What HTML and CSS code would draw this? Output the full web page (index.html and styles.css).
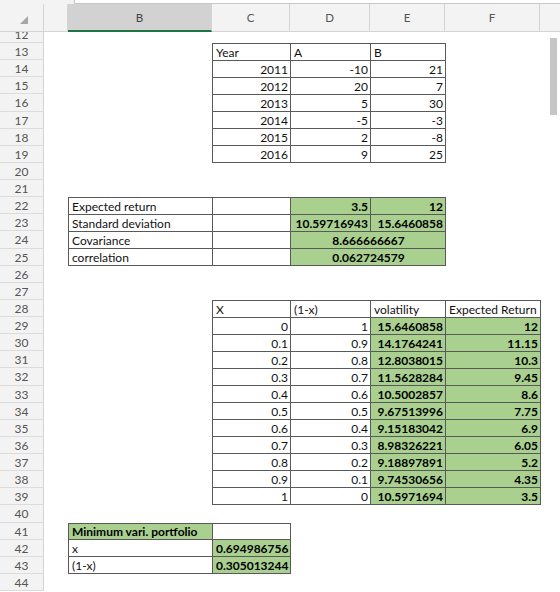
FILE: index.html
```html
<!DOCTYPE html>
<html lang="en">
<head>
  <meta charset="UTF-8">
  <title>Portfolio of two assets</title>
  <meta name="viewport" content="width=device-width, initial-scale=1.0">
  <link rel="stylesheet" href="styles.css">
</head>
<body>

<div class="topbar"><div class="formula"></div></div>

<div class="colheads">
  <div class="corner">
    <svg width="8" height="8" viewBox="0 0 8 8"><polygon points="8,0 8,8 0,8" fill="#a6a6a6"/></svg>
  </div>
  <div class="colhead"></div>
  <div class="colhead selected">B</div>
  <div class="colhead">C</div>
  <div class="colhead">D</div>
  <div class="colhead">E</div>
  <div class="colhead">F</div>
  <div class="colhead last"></div>
</div>

<div class="viewport">
  <div class="sheet">
    <div class="rowhead">12</div>
    <div class="rowhead">13</div>
    <div class="rowhead">14</div>
    <div class="rowhead">15</div>
    <div class="rowhead">16</div>
    <div class="rowhead">17</div>
    <div class="rowhead">18</div>
    <div class="rowhead">19</div>
    <div class="rowhead">20</div>
    <div class="rowhead">21</div>
    <div class="rowhead">22</div>
    <div class="rowhead">23</div>
    <div class="rowhead">24</div>
    <div class="rowhead">25</div>
    <div class="rowhead">26</div>
    <div class="rowhead">27</div>
    <div class="rowhead">28</div>
    <div class="rowhead">29</div>
    <div class="rowhead">30</div>
    <div class="rowhead">31</div>
    <div class="rowhead">32</div>
    <div class="rowhead">33</div>
    <div class="rowhead">34</div>
    <div class="rowhead">35</div>
    <div class="rowhead">36</div>
    <div class="rowhead">37</div>
    <div class="rowhead">38</div>
    <div class="rowhead">39</div>
    <div class="rowhead">40</div>
    <div class="rowhead">41</div>
    <div class="rowhead">42</div>
    <div class="rowhead">43</div>
    <div class="rowhead">44</div>

    <!-- C13:E19 returns by year -->
    <table class="block t-years">
      <colgroup><col style="width:78px"><col style="width:80px"><col style="width:75px"></colgroup>
      <tr><td>Year</td><td>A</td><td>B</td></tr>
      <tr><td class="num">2011</td><td class="num">-10</td><td class="num">21</td></tr>
      <tr><td class="num">2012</td><td class="num">20</td><td class="num">7</td></tr>
      <tr><td class="num">2013</td><td class="num">5</td><td class="num">30</td></tr>
      <tr><td class="num">2014</td><td class="num">-5</td><td class="num">-3</td></tr>
      <tr><td class="num">2015</td><td class="num">2</td><td class="num">-8</td></tr>
      <tr><td class="num">2016</td><td class="num">9</td><td class="num">25</td></tr>
    </table>

    <!-- B22:E25 summary stats -->
    <table class="block t-stats">
      <colgroup><col style="width:144px"><col style="width:78px"><col style="width:80px"><col style="width:75px"></colgroup>
      <tr><td>Expected return</td><td></td><td class="num hl">3.5</td><td class="num hl">12</td></tr>
      <tr><td>Standard deviation</td><td></td><td class="num hl">10.59716943</td><td class="num hl">15.6460858</td></tr>
      <tr><td>Covariance</td><td></td><td class="mid hl" colspan="2">8.666666667</td></tr>
      <tr><td>correlation</td><td></td><td class="mid hl" colspan="2">0.062724579</td></tr>
    </table>

    <!-- C28:F39 weights vs risk/return -->
    <table class="block t-frontier">
      <colgroup><col style="width:78px"><col style="width:80px"><col style="width:75px"><col style="width:95px"></colgroup>
      <tr><td>X</td><td>(1-x)</td><td>volatility</td><td>Expected Return</td></tr>
      <tr><td class="num">0</td><td class="num">1</td><td class="num hl">15.6460858</td><td class="num hl">12</td></tr>
      <tr><td class="num">0.1</td><td class="num">0.9</td><td class="num hl">14.1764241</td><td class="num hl">11.15</td></tr>
      <tr><td class="num">0.2</td><td class="num">0.8</td><td class="num hl">12.8038015</td><td class="num hl">10.3</td></tr>
      <tr><td class="num">0.3</td><td class="num">0.7</td><td class="num hl">11.5628284</td><td class="num hl">9.45</td></tr>
      <tr><td class="num">0.4</td><td class="num">0.6</td><td class="num hl">10.5002857</td><td class="num hl">8.6</td></tr>
      <tr><td class="num">0.5</td><td class="num">0.5</td><td class="num hl">9.67513996</td><td class="num hl">7.75</td></tr>
      <tr><td class="num">0.6</td><td class="num">0.4</td><td class="num hl">9.15183042</td><td class="num hl">6.9</td></tr>
      <tr><td class="num">0.7</td><td class="num">0.3</td><td class="num hl">8.98326221</td><td class="num hl">6.05</td></tr>
      <tr><td class="num">0.8</td><td class="num">0.2</td><td class="num hl">9.18897891</td><td class="num hl">5.2</td></tr>
      <tr><td class="num">0.9</td><td class="num">0.1</td><td class="num hl">9.74530656</td><td class="num hl">4.35</td></tr>
      <tr><td class="num">1</td><td class="num">0</td><td class="num hl">10.5971694</td><td class="num hl">3.5</td></tr>
    </table>

    <!-- B41:C43 minimum variance weights -->
    <table class="block t-minvar">
      <colgroup><col style="width:144px"><col style="width:78px"></colgroup>
      <tr><td class="hl">Minimum vari. portfolio</td><td></td></tr>
      <tr><td>x</td><td class="num hl">0.694986756</td></tr>
      <tr><td>(1-x)</td><td class="num hl">0.305013244</td></tr>
    </table>
  </div>

  <div class="scrollthumb"></div>
</div>

</body>
</html>
```

FILE: styles.css
```css
html, body {
  margin: 0;
  padding: 0;
  background-color: #fff;
  font-family: Lato, "Open Sans", sans-serif;
}

body {
  width: 560px;
  height: 592px;
  overflow: hidden;
}

/* strip left over from the formula bar */
.topbar {
  height: 4px;
  background-color: #f3f3f3;
  padding-left: 74px;
  box-sizing: border-box;
}

.formula {
  height: 3px;
  background-color: #fff;
  border-left: 1px solid #c8c8c8;
  border-bottom: 1px solid #c8c8c8;
}

.colheads,
.sheet {
  display: grid;
  grid-template-columns: 44px 24px 144px 78px 80px 75px 95px 1fr;
}

.colheads {
  height: 28px;
  background-color: #f3f3f3;
}

.corner,
.colhead {
  box-sizing: border-box;
  border-right: 1px solid #d4d4d4;
  border-bottom: 1px solid #d4d4d4;
  display: flex;
  align-items: center;
  justify-content: center;
  font-size: 11.5px;
  color: #555;
}

.corner svg {
  margin: 4px 0 0 4px;
}

.colhead.selected {
  background-color: #d2d2d2;
  border-bottom: 2px solid #217346;
  color: #444;
}

.colhead.last {
  border-right: none;
}

.viewport {
  position: relative;
  height: 560px;
  overflow: hidden;
}

.sheet {
  grid-template-rows: repeat(33, 17.13px);
  margin-top: -6.13px;
}

.rowhead {
  grid-column: 1;
  box-sizing: border-box;
  background-color: #f3f3f3;
  border-right: 1px solid #d4d4d4;
  border-bottom: 1px solid #dcdcdc;
  font-size: 12px;
  color: #555;
  text-align: center;
  line-height: 17px;
}

/* bordered cell ranges */
.block {
  border-collapse: collapse;
  table-layout: fixed;
  width: 100%;
  height: 100%;
  font-size: 12px;
  color: #111;
}

.block td {
  border: 1px solid #595959;
  padding: 0 2px 0 3px;
  line-height: 15px;
  white-space: nowrap;
  overflow: hidden;
  vertical-align: bottom;
}

.block td.num {
  text-align: right;
}

.block td.mid {
  text-align: center;
}

.block td.hl {
  background-color: #a9d08e;
  font-weight: bold;
  color: #000;
}

.t-years { grid-column: 4 / 7; grid-row: 2 / 9; }
.t-stats { grid-column: 3 / 7; grid-row: 11 / 15; }
.t-frontier { grid-column: 4 / 8; grid-row: 17 / 29; }
.t-minvar { grid-column: 3 / 5; grid-row: 30 / 33; }

.scrollthumb {
  position: absolute;
  top: 6px;
  left: 550px;
  width: 7px;
  height: 77px;
  background-color: #c6c6c6;
}
```
